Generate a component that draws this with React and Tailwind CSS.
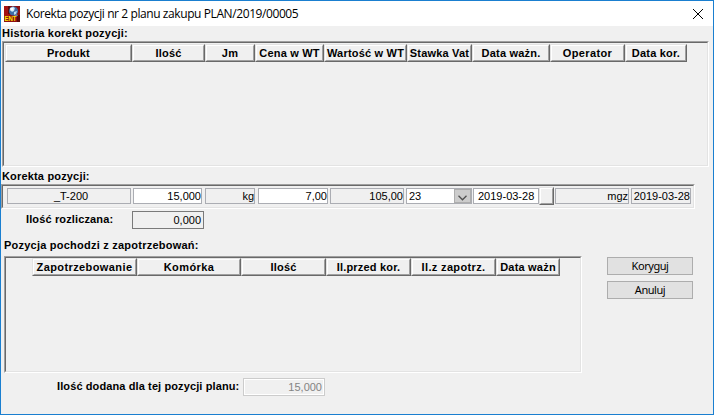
const historyColumns = [
  { label: "Produkt", cls: "w-[127px]" },
  { label: "Ilość", cls: "w-[73px]" },
  { label: "Jm", cls: "w-[50px]" },
  { label: "Cena w WT", cls: "w-[69px]" },
  { label: "Wartość w WT", cls: "w-[83px]" },
  { label: "Stawka Vat", cls: "w-[65px]" },
  { label: "Data ważn.", cls: "w-[78px]" },
  { label: "Operator", cls: "w-[75px] tracking-[0.35px]" },
  { label: "Data kor.", cls: "w-[62px]" },
];

const demandColumns = [
  { label: "Zapotrzebowanie", cls: "w-[105px] tracking-[0.4px]" },
  { label: "Komórka", cls: "w-[104px] tracking-[0.4px]" },
  { label: "Ilość", cls: "w-[85px]" },
  { label: "Il.przed kor.", cls: "w-[85px]" },
  { label: "Il.z zapotrz.", cls: "w-[85px] tracking-[0.35px]" },
  { label: "Data ważn", cls: "w-[64px]" },
];

// Sunken 3D panel
function Panel({ className = "", children }) {
  return (
    <div className={`border border-t-[#a0a0a0] border-l-[#a0a0a0] border-r-white border-b-white ${className}`}>
      <div className="h-full border border-t-[#696969] border-l-[#696969] border-r-[#e3e3e3] border-b-[#e3e3e3]">
        {children}
      </div>
    </div>
  );
}

// Raised column headers
function HeaderRow({ columns, className = "" }) {
  return (
    <div className={`flex tracking-[0.2px] ${className}`}>
      {columns.map((c) => (
        <div
          key={c.label}
          className={`h-[18px] shrink-0 border border-t-[#e3e3e3] border-l-[#e3e3e3] border-r-[#696969] border-b-[#696969] ${c.cls}`}
        >
          <div className="flex h-full items-center justify-center border border-t-white border-l-white border-r-[#a0a0a0] border-b-[#a0a0a0] text-[11px] leading-[14px] font-bold whitespace-nowrap">
            {c.label}
          </div>
        </div>
      ))}
    </div>
  );
}

function Label({ className = "", children }) {
  return (
    <div className={`h-[14px] text-[11px] leading-[14px] font-bold whitespace-nowrap ${className}`}>
      {children}
    </div>
  );
}

function Field({ className = "", children }) {
  return (
    <div className={`flex h-4 shrink-0 items-center border border-[#abadb3] text-[11px] leading-[14px] whitespace-nowrap ${className}`}>
      {children}
    </div>
  );
}

function Button({ children }) {
  return (
    <button className="flex h-[18px] w-[86px] items-center justify-center border border-[#adadad] bg-[#e1e1e1] font-['Noto_Sans',sans-serif] text-[11px] leading-[14px] tracking-[-0.45px]">
      {children}
    </button>
  );
}

function AppIcon() {
  return (
    <svg width="16" height="16" viewBox="0 0 16 16">
      <rect width="16" height="16" fill="#8e1010" />
      <path d="M0 0h5v10H0z" fill="#a51212" />
      <path d="M4 0h2v8H4zM13 9h3v7h-3z" fill="#5c0a0c" />
      <circle cx="9.5" cy="5" r="4.6" fill="#3f6ea8" />
      <path d="M6 2l3-1.5 2 1.5-1 3-2 1-2-2zM10 6l3-1-1 3-2 1z" fill="#b9dcf2" />
      <path d="M6.5 2h3v2.5h-3z" fill="#fff" />
      <path d="M10 9l3-1 1 2h-3z" fill="#6e7f9c" />
      <text x="0.5" y="15.2" fontSize="6.6" fontWeight="700" fontFamily="Liberation Sans, sans-serif" textLength="12" lengthAdjust="spacingAndGlyphs" fill="#ffe600">
        ENT
      </text>
    </svg>
  );
}

export default function App() {
  return (
    <div className="flex h-[415px] w-[714px] flex-col overflow-hidden border border-[#1a7fd0] bg-[#f0f0f0] font-['Liberation_Sans',Arial,sans-serif] text-black">
      <div className="flex h-[25px] shrink-0 items-center bg-white pr-[10px] pl-[3px]">
        <AppIcon />
        <div className="ml-[6px] font-['Open_Sans',sans-serif] text-[12px] leading-4 tracking-[-0.41px] whitespace-nowrap">
          Korekta pozycji nr 2 planu zakupu PLAN/2019/00005
        </div>
        <svg className="ml-auto" width="10" height="10" viewBox="0 0 10 10" stroke="#000" strokeWidth="1">
          <path d="M0 0l10 10M10 0L0 10" />
        </svg>
      </div>

      <Label className="ml-px tracking-[0.2px]">Historia korekt pozycji:</Label>
      <Panel className="mt-px ml-px h-[126px] w-[707px]">
        <HeaderRow columns={historyColumns} className="pt-px pl-px" />
      </Panel>

      <Label className="mt-[2px] ml-px tracking-[0.17px]">Korekta pozycji:</Label>
      <Panel className="mt-px h-[25px] w-[694px]">
        <div className="flex pt-[2px] pl-1">
          <Field className="w-[124px] justify-center pl-1">_T-200</Field>
          <Field className="ml-[2px] w-[69px] justify-end bg-white">15,000</Field>
          <Field className="ml-[3px] w-[50px] justify-end">kg</Field>
          <Field className="ml-[3px] w-[70px] justify-end bg-white">7,00</Field>
          <Field className="ml-[2px] w-[74px] justify-end">105,00</Field>
          <Field className="ml-[2px] w-[66px] bg-white pl-[2px]">
            23
            <div className="ml-auto flex h-[14px] w-[17px] items-center justify-center border border-[#adadad] bg-[#cccccc] pt-[4px]">
              <svg width="9" height="6" viewBox="0 0 9 6" fill="none" stroke="#505050" strokeWidth="1.3">
                <path d="M0.5 0.8L4.5 4.8L8.5 0.8" />
              </svg>
            </div>
          </Field>
          <Field className="ml-px w-[66px] bg-white pl-[4px]">2019-03-28</Field>
          <div className="-my-px h-[18px] w-[15px] shrink-0 border border-t-[#e3e3e3] border-l-[#e3e3e3] border-r-[#696969] border-b-[#696969]">
            <div className="h-full border border-t-white border-l-white border-r-[#a0a0a0] border-b-[#a0a0a0]" />
          </div>
          <Field className="ml-px w-[74px] justify-end">mgz</Field>
          <Field className="ml-[2px] w-[60px] justify-end">2019-03-28</Field>
        </div>
      </Panel>

      <div className="mt-[2px] flex h-[18px] items-start">
        <Label className="mt-px ml-[25px] w-[106px] tracking-[0.13px]">Ilość rozliczana:</Label>
        <div className="flex h-[18px] w-[72px] items-center justify-end border border-[#7a7a7a] pr-[2px] text-[11px]">
          0,000
        </div>
      </div>

      <Label className="mt-[9px] ml-[3px] tracking-[0.23px]">Pozycja pochodzi z zapotrzebowań:</Label>
      <div className="mt-[4px] flex">
        <Panel className="ml-[3px] h-[117px] w-[578px]">
          <HeaderRow columns={demandColumns} className="pl-[26px]" />
        </Panel>
        <div className="mt-px ml-[25px] flex flex-col gap-[6px]">
          <Button>Koryguj</Button>
          <Button>Anuluj</Button>
        </div>
      </div>

      <div className="mt-[5px] flex">
        <Label className="mt-px ml-14 w-[186px] tracking-[0.11px]">Ilość dodana dla tej pozycji planu:</Label>
        <div className="flex h-[18px] w-[82px] items-center justify-end border border-[#cccccc] pr-[2px] text-[11px] text-[#838383] ring-1 ring-white ring-inset">
          15,000
        </div>
      </div>
    </div>
  );
}
